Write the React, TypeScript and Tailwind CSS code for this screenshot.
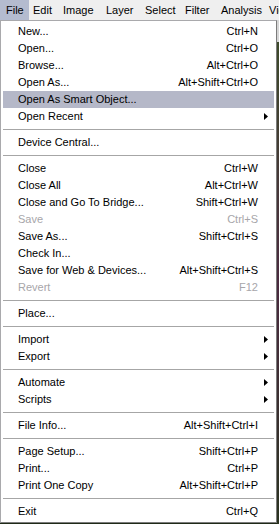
import React from 'react';

type Item =
    | { type: 'sep' }
    | { type: 'item'; label: string; shortcut?: string; sub?: boolean; disabled?: boolean; active?: boolean };

// widths measured off the menu bar so labels land where they should
const menuBar = [
    { name: 'File', cls: 'w-[29px] pl-[6px] bg-[#b4bbcf]' },
    { name: 'Edit', cls: 'w-[30px] pl-[4px]' },
    { name: 'Image', cls: 'w-[43px] pl-[4px]' },
    { name: 'Layer', cls: 'w-[39px] pl-[4px]' },
    { name: 'Select', cls: 'w-[40px] pl-[4px]' },
    { name: 'Filter', cls: 'w-[36px] pl-[4px]' },
    { name: 'Analysis', cls: 'w-[48px] pl-[4px]' },
    { name: 'View', cls: 'w-[40px] pl-[4px]' },
];

const items: Item[] = [
    { type: 'item', label: 'New...', shortcut: 'Ctrl+N' },
    { type: 'item', label: 'Open...', shortcut: 'Ctrl+O' },
    { type: 'item', label: 'Browse...', shortcut: 'Alt+Ctrl+O' },
    { type: 'item', label: 'Open As...', shortcut: 'Alt+Shift+Ctrl+O' },
    { type: 'item', label: 'Open As Smart Object...', active: true },
    { type: 'item', label: 'Open Recent', sub: true },
    { type: 'sep' },
    { type: 'item', label: 'Device Central...' },
    { type: 'sep' },
    { type: 'item', label: 'Close', shortcut: 'Ctrl+W' },
    { type: 'item', label: 'Close All', shortcut: 'Alt+Ctrl+W' },
    { type: 'item', label: 'Close and Go To Bridge...', shortcut: 'Shift+Ctrl+W' },
    { type: 'item', label: 'Save', shortcut: 'Ctrl+S', disabled: true },
    { type: 'item', label: 'Save As...', shortcut: 'Shift+Ctrl+S' },
    { type: 'item', label: 'Check In...' },
    { type: 'item', label: 'Save for Web & Devices...', shortcut: 'Alt+Shift+Ctrl+S' },
    { type: 'item', label: 'Revert', shortcut: 'F12', disabled: true },
    { type: 'sep' },
    { type: 'item', label: 'Place...' },
    { type: 'sep' },
    { type: 'item', label: 'Import', sub: true },
    { type: 'item', label: 'Export', sub: true },
    { type: 'sep' },
    { type: 'item', label: 'Automate', sub: true },
    { type: 'item', label: 'Scripts', sub: true },
    { type: 'sep' },
    { type: 'item', label: 'File Info...', shortcut: 'Alt+Shift+Ctrl+I' },
    { type: 'sep' },
    { type: 'item', label: 'Page Setup...', shortcut: 'Shift+Ctrl+P' },
    { type: 'item', label: 'Print...', shortcut: 'Ctrl+P' },
    { type: 'item', label: 'Print One Copy', shortcut: 'Alt+Shift+Ctrl+P' },
    { type: 'sep' },
    { type: 'item', label: 'Exit', shortcut: 'Ctrl+Q' },
];

function Arrow() {
    return (
        <svg width="5" height="7" viewBox="0 0 5 7" className="shrink-0">
            <path d="M0 0 L4 3.5 L0 7 Z" fill="#000" />
        </svg>
    );
}

export default function App() {
    return (
        <div
            className="w-[279px] h-[524px] overflow-hidden flex flex-col bg-[#1f2a17] text-[11px] leading-none text-black"
            style={{ fontFamily: '"Liberation Sans", Arial, sans-serif' }}
        >
            {/* Menu bar */}
            <div className="h-[20px] shrink-0 flex items-stretch bg-[#efefef] whitespace-nowrap overflow-hidden">
                {menuBar.map((m) => (
                    <div key={m.name} className={'shrink-0 flex items-center ' + m.cls}>
                        {m.name}
                    </div>
                ))}
            </div>

            <div className="flex flex-1 min-h-0">
                {/* Popup menu */}
                <div className="w-[277px] h-[503px] shrink-0 bg-white border-t border-l border-[#a9a9ac] border-r border-r-[#7c7c7c] border-b border-b-[#7c7c7c] px-[2px] pt-[2px]">
                    {items.map((it, i) =>
                        it.type === 'sep' ? (
                            <div key={i} className="h-[9px] flex items-center">
                                <div className="h-px w-full bg-[#a6a6a6]" />
                            </div>
                        ) : (
                            <div
                                key={i}
                                className={
                                    'h-[17px] flex items-center pl-[15px] pr-[5px] whitespace-nowrap ' +
                                    (it.active ? 'bg-[#b5b8c8] ' : '') +
                                    (it.disabled ? 'text-[#a7a6aa]' : 'text-black')
                                }
                            >
                                <span className="flex-1">{it.label}</span>
                                {it.shortcut && <span className="pr-[11px]">{it.shortcut}</span>}
                                {it.sub && <Arrow />}
                            </div>
                        )
                    )}
                </div>

                {/* Background peeking through on the right */}
                <div className="flex-1 flex flex-col">
                    <div className="h-[22px] bg-[#d6d6d6]" />
                    <div className="flex-1 bg-gradient-to-b from-[#3d4a2a] via-[#4a2a3f] to-[#2a3320]" />
                </div>
            </div>
        </div>
    );
}
